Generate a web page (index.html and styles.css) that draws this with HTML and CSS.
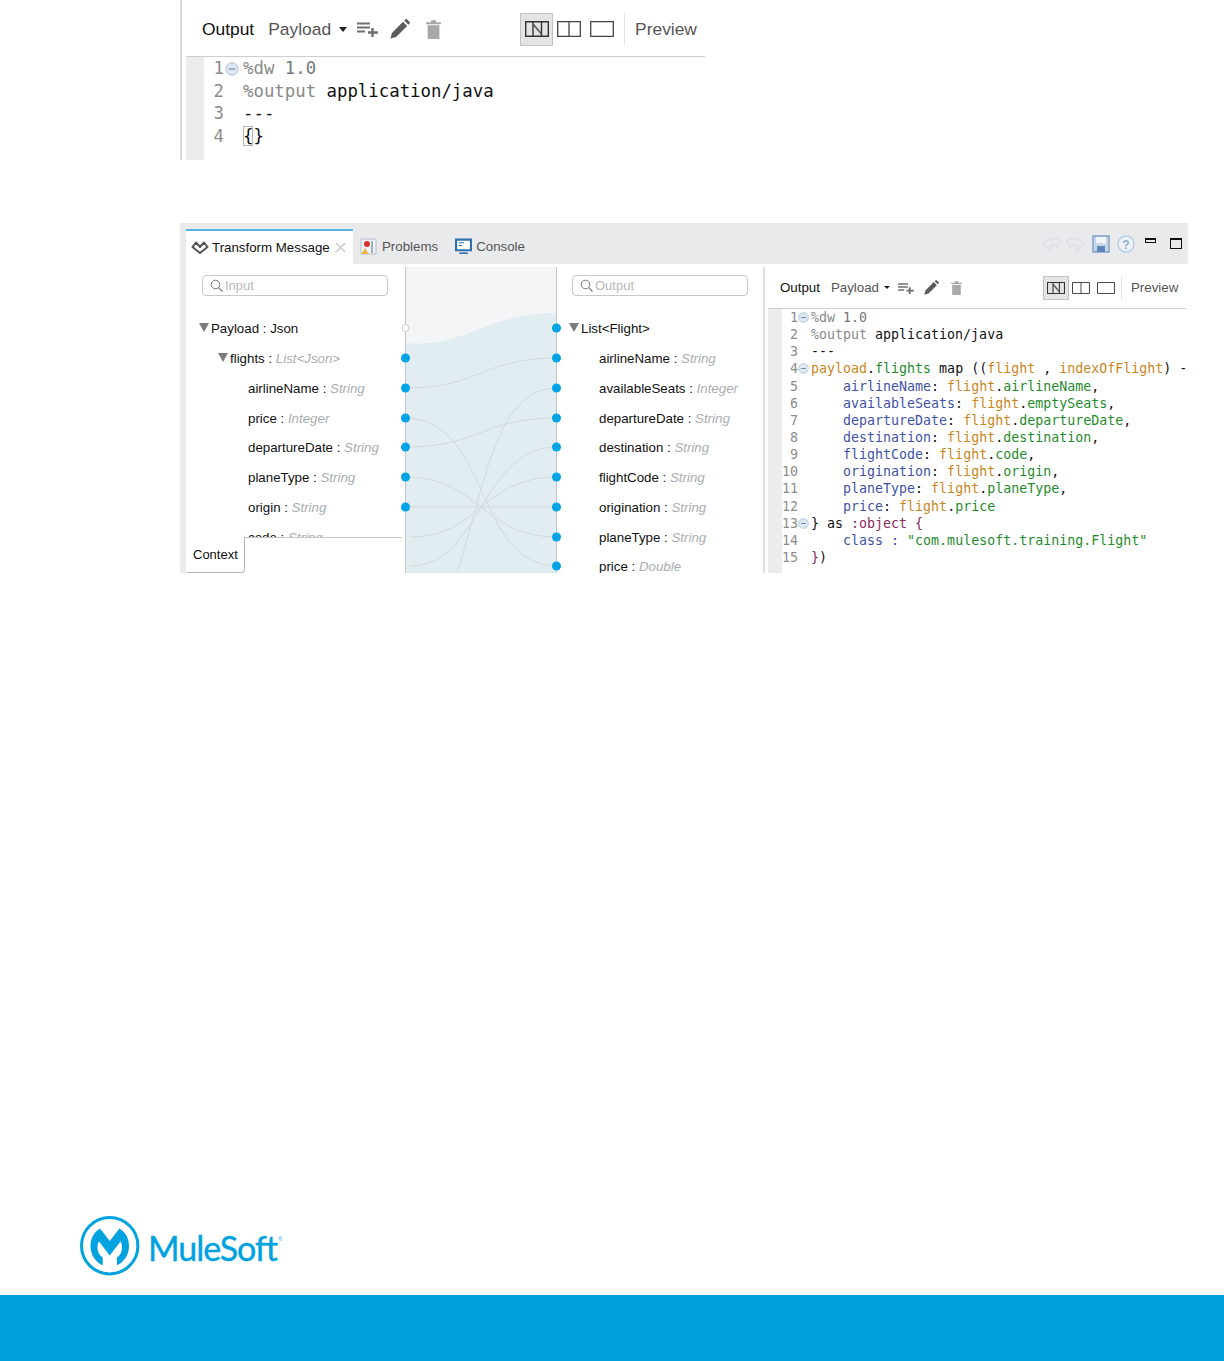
FILE: index.html
```html
<!DOCTYPE html>
<html lang="en">
<head>
<meta charset="utf-8">
<title>Transform Message</title>
<link rel="stylesheet" href="styles.css">
</head>
<body>
<svg class="defs" width="0" height="0" aria-hidden="true">
  <symbol id="i-add" viewBox="0 0 21 16"><path d="M0 2.5h13M0 6.5h13M0 10.5h8" stroke="#6f6f6f" stroke-width="2" fill="none"/><path d="M15.5 7v9M11 11.5h10" stroke="#6f6f6f" stroke-width="2.4" fill="none"/></symbol>
  <symbol id="i-pen" viewBox="0 0 20 20"><path d="M0.5 19.5l1.4-5.6L13 2.8l4.2 4.2L6.1 18.1z" fill="#5c5c5c"/><path d="M14.2 1.6l1-1a1.4 1.4 0 0 1 2 0l2.2 2.2a1.4 1.4 0 0 1 0 2l-1 1z" fill="#5c5c5c"/></symbol>
  <symbol id="i-trash" viewBox="0 0 15 19"><path d="M0 2.2h15v2H0zM5 .2h5v2H5z" fill="#a8a8a8"/><path d="M1.6 5.2h11.8V19H1.6z" fill="#a8a8a8"/></symbol>
  <symbol id="i-map" viewBox="0 0 24 16"><path d="M.7.7h22.6v14.6H.7z" fill="none" stroke="#333" stroke-width="1.4"/><path d="M8 .7v14.6M16.5.7v14.6" stroke="#333" stroke-width="1.4"/><path d="M8 3l8.5 10" stroke="#555" stroke-width="1.6"/></symbol>
  <symbol id="i-split" viewBox="0 0 24 16"><path d="M.7.7h22.6v14.6H.7zM12 .7v14.6" fill="none" stroke="#444" stroke-width="1.3"/></symbol>
  <symbol id="i-single" viewBox="0 0 24 16"><path d="M.7.7h22.6v14.6H.7z" fill="none" stroke="#444" stroke-width="1.3"/></symbol>
  <symbol id="i-fold" viewBox="0 0 14 14"><circle cx="7" cy="7" r="6.2" fill="#dfe8f0" stroke="#a9c0d4"/><path d="M3.8 7h6.4" stroke="#6f93b2" stroke-width="1.3"/></symbol>
</svg>

<div class="page">
  <section class="shot shot-small">
    <div class="toolbar">
      <span class="tb-title">Output</span>
      <span class="tb-select">Payload</span>
      <span class="tb-caret"></span>
      <svg class="tb-add"><use href="#i-add"/></svg>
      <svg class="tb-pen"><use href="#i-pen"/></svg>
      <svg class="tb-trash"><use href="#i-trash"/></svg>
      <span class="tb-view tb-view-on"><svg class="tb-view-icon"><use href="#i-map"/></svg></span>
      <span class="tb-view"><svg class="tb-view-icon"><use href="#i-split"/></svg></span>
      <span class="tb-view"><svg class="tb-view-icon"><use href="#i-single"/></svg></span>
      <span class="tb-preview">Preview</span>
    </div>
    <div class="code code-small">
      <div class="ln"><span class="n">1</span><svg class="fold"><use href="#i-fold"/></svg><span class="d">%dw</span> <span class="g">1.0</span></div>
      <div class="ln"><span class="n">2</span><span class="nofold"></span><span class="d">%output</span> application/java</div>
      <div class="ln"><span class="n">3</span><span class="nofold"></span>---</div>
      <div class="ln"><span class="n">4</span><span class="nofold"></span><span class="match">{</span>}</div>
    </div>
  </section>

  <section class="shot-large">
    <header class="tabbar">
      <div class="tab tab-active">
        <svg class="tab-icon-t" viewBox="0 0 18 13"><path d="M1.500 6L9 12l7.500-6L13 1.500 9 6 5 1.500z" fill="none" stroke="#555" stroke-width="2" stroke-linejoin="round"/></svg>
        <span>Transform Message</span>
        <svg class="tab-close" viewBox="0 0 11 11"><path d="M1 1l9 9M10 1l-9 9" stroke="#c9c9c9" stroke-width="1.6"/></svg>
      </div>
      <div class="tab">
        <svg class="tab-icon" viewBox="0 0 17 17"><path d="M1 1h15v15H1z" fill="#eef1f5" stroke="#b8c0cc"/><path d="M12 3v12" stroke="#9db0c8" stroke-width="2"/><circle cx="7" cy="6" r="3" fill="#d8342c"/><path d="M5 10l3.500 6h-7z" fill="#eab53d"/></svg>
        <span>Problems</span>
      </div>
      <div class="tab">
        <svg class="tab-icon" viewBox="0 0 16 15"><path d="M1 1h14v10H1z" fill="#fff" stroke="#2f6fb0" stroke-width="2"/><path d="M3.500 4h5M3.500 6.500h3" stroke="#2f6fb0"/><path d="M4 13h8v1.500H4z" fill="#2f6fb0"/></svg>
        <span>Console</span>
      </div>
      <div class="tab-actions">
        <svg class="act" viewBox="0 0 20 17"><path d="M1 9l8-7 1 3c5-2 8-1 9 0l-3 8-2-3-5 1v5z" fill="none" stroke="#dcdfe3" stroke-width="1.300"/></svg>
        <svg class="act" viewBox="0 0 20 17"><path d="M19 9l-8-7-1 3C5 3 2 4 1 5l3 8 2-3 5 1v5z" fill="none" stroke="#dcdfe3" stroke-width="1.300"/></svg>
        <svg class="act-save" viewBox="0 0 18 18"><path d="M1 1h16v16H1z" fill="#c8d6e8" stroke="#7f9dc4" stroke-width="1.400"/><path d="M4 2h10v6H4z" fill="#f1f4f8"/><path d="M5 11h8v6H5z" fill="#5f86b8"/></svg>
        <svg class="act-help" viewBox="0 0 18 18"><circle cx="9" cy="9" r="8" fill="#eef2f7" stroke="#b7cce2" stroke-width="1.400"/><text x="9" y="13.500" class="help-q">?</text></svg>
        <span class="act-min"></span>
        <span class="act-max"></span>
      </div>
    </header>

    <div class="workspace">
      <div class="pane pane-in">
        <div class="search"><svg class="search-icon" viewBox="0 0 13 13"><circle cx="5.500" cy="5.500" r="4.300" fill="none" stroke="#777" stroke-width="1"/><path d="M8.700 8.700l3.800 3.800" stroke="#777" stroke-width="1.200"/></svg><span>Input</span></div>
        <ul class="tree">
          <li class="row d0"><i class="tri"></i><span>Payload : Json</span></li>
          <li class="row d1"><i class="tri"></i><span>flights : <em>List&lt;Json&gt;</em></span></li>
          <li class="row d2"><span>airlineName : <em>String</em></span></li>
          <li class="row d2"><span>price : <em>Integer</em></span></li>
          <li class="row d2"><span>departureDate : <em>String</em></span></li>
          <li class="row d2"><span>planeType : <em>String</em></span></li>
          <li class="row d2"><span>origin : <em>String</em></span></li>
          <li class="row d2"><span>code : <em>String</em></span></li>
        </ul>
        <div class="context"><div class="context-tab">Context</div></div>
      </div>

      <svg class="mapping" viewBox="0 0 152 306">
        <rect width="152" height="306" fill="#f3f5f6"/>
        <path d="M0 76C60 82 80 46 152 46V306H0Z" fill="#e2edf2"/>
        <path class="rail" d="M.5 0V306M151.500 0V306"/>
        <g class="links">
          <path d="M0 121C76 121 76 91 152 91"/>
          <path d="M0 151C85 151 70 299 152 299"/>
          <path d="M0 180C76 180 76 151 152 151"/>
          <path d="M0 210C76 210 76 270 152 270"/>
          <path d="M0 240H152"/>
          <path d="M5 270C76 270 76 210 152 210"/>
          <path d="M5 299C76 299 76 180 152 180"/>
          <path d="M52 306C80 220 90 121 152 121"/>
        </g>
        <g class="dots">
          <circle class="dot-open" cx="0.500" cy="61" r="3.500"/>
          <circle cx="0.500" cy="91" r="4.500"/><circle cx="0.500" cy="121" r="4.500"/><circle cx="0.500" cy="151" r="4.500"/><circle cx="0.500" cy="180" r="4.500"/><circle cx="0.500" cy="210" r="4.500"/><circle cx="0.500" cy="240" r="4.500"/>
          <circle cx="151.500" cy="61" r="4.500"/><circle cx="151.500" cy="91" r="4.500"/><circle cx="151.500" cy="121" r="4.500"/><circle cx="151.500" cy="151" r="4.500"/><circle cx="151.500" cy="180" r="4.500"/><circle cx="151.500" cy="210" r="4.500"/><circle cx="151.500" cy="240" r="4.500"/><circle cx="151.500" cy="270" r="4.500"/><circle cx="151.500" cy="299" r="4.500"/>
        </g>
      </svg>

      <div class="pane pane-out">
        <div class="search"><svg class="search-icon" viewBox="0 0 13 13"><circle cx="5.500" cy="5.500" r="4.300" fill="none" stroke="#777" stroke-width="1"/><path d="M8.700 8.700l3.800 3.800" stroke="#777" stroke-width="1.200"/></svg><span>Output</span></div>
        <ul class="tree">
          <li class="row d0o"><i class="tri"></i><span>List&lt;Flight&gt;</span></li>
          <li class="row d2o"><span>airlineName : <em>String</em></span></li>
          <li class="row d2o"><span>availableSeats : <em>Integer</em></span></li>
          <li class="row d2o"><span>departureDate : <em>String</em></span></li>
          <li class="row d2o"><span>destination : <em>String</em></span></li>
          <li class="row d2o"><span>flightCode : <em>String</em></span></li>
          <li class="row d2o"><span>origination : <em>String</em></span></li>
          <li class="row d2o"><span>planeType : <em>String</em></span></li>
          <li class="row d2o"><span>price : <em>Double</em></span></li>
        </ul>
      </div>

      <div class="editor">
        <div class="toolbar">
          <span class="tb-title">Output</span>
          <span class="tb-select">Payload</span>
          <span class="tb-caret"></span>
          <svg class="tb-add"><use href="#i-add"/></svg>
          <svg class="tb-pen"><use href="#i-pen"/></svg>
          <svg class="tb-trash"><use href="#i-trash"/></svg>
          <span class="tb-view tb-view-on"><svg class="tb-view-icon"><use href="#i-map"/></svg></span>
          <span class="tb-view"><svg class="tb-view-icon"><use href="#i-split"/></svg></span>
          <span class="tb-view"><svg class="tb-view-icon"><use href="#i-single"/></svg></span>
          <span class="tb-preview">Preview</span>
        </div>
        <div class="code code-large">
          <div class="ln"><span class="n">1</span><svg class="fold"><use href="#i-fold"/></svg><span class="d">%dw</span> <span class="g">1.0</span></div>
          <div class="ln"><span class="n">2</span><span class="nofold"></span><span class="d">%output</span> application/java</div>
          <div class="ln"><span class="n">3</span><span class="nofold"></span>---</div>
          <div class="ln"><span class="n">4</span><svg class="fold"><use href="#i-fold"/></svg><span class="o">payload</span>.<span class="v">flights</span> map ((<span class="o">flight</span> , <span class="o">indexOfFlight</span>) -</div>
          <div class="ln"><span class="n">5</span><span class="nofold"></span>    <span class="k">airlineName</span>: <span class="o">flight</span>.<span class="v">airlineName</span>,</div>
          <div class="ln"><span class="n">6</span><span class="nofold"></span>    <span class="k">availableSeats</span>: <span class="o">flight</span>.<span class="v">emptySeats</span>,</div>
          <div class="ln"><span class="n">7</span><span class="nofold"></span>    <span class="k">departureDate</span>: <span class="o">flight</span>.<span class="v">departureDate</span>,</div>
          <div class="ln"><span class="n">8</span><span class="nofold"></span>    <span class="k">destination</span>: <span class="o">flight</span>.<span class="v">destination</span>,</div>
          <div class="ln"><span class="n">9</span><span class="nofold"></span>    <span class="k">flightCode</span>: <span class="o">flight</span>.<span class="v">code</span>,</div>
          <div class="ln"><span class="n">10</span><span class="nofold"></span>    <span class="k">origination</span>: <span class="o">flight</span>.<span class="v">origin</span>,</div>
          <div class="ln"><span class="n">11</span><span class="nofold"></span>    <span class="k">planeType</span>: <span class="o">flight</span>.<span class="v">planeType</span>,</div>
          <div class="ln"><span class="n">12</span><span class="nofold"></span>    <span class="k">price</span>: <span class="o">flight</span>.<span class="v">price</span></div>
          <div class="ln"><span class="n">13</span><svg class="fold"><use href="#i-fold"/></svg>} as <span class="p">:object {</span></div>
          <div class="ln"><span class="n">14</span><span class="nofold"></span>    <span class="k">class :</span> <span class="v">"com.mulesoft.training.Flight"</span></div>
          <div class="ln"><span class="n">15</span><span class="nofold"></span><span class="p">}</span>)</div>
        </div>
      </div>
    </div>
  </section>

  <div class="brand">
    <svg class="brand-mark" viewBox="0 0 60 60">
      <circle cx="29.700" cy="29.700" r="28.200" fill="none" stroke="#00a2df" stroke-width="3"/>
      <path d="M20 12.500L29.700 25L39.500 12.500C45.500 16 49 22.500 49 30C49 39 44 46 37 49.300V41.500C40 39.500 42 36 42 31.500C42 29 41.500 27 40.500 25.500L29.700 39.500L19 25.500C18 27 17.500 29 17.500 31.500C17.500 36 19.500 39.500 22.700 41.500V49.300C15.500 46 10.500 39 10.500 30C10.500 22.500 14 16 20 12.500Z" fill="#00a2df"/>
    </svg>
    <span class="brand-name">MuleSoft</span><span class="brand-reg">®</span>
  </div>
  <footer class="footer-bar"></footer>
</div>
</body>
</html>
```
FILE: styles.css
```css
* { box-sizing: border-box; }
html, body { margin: 0; padding: 0; background: #fff; }
body { font-family: "Liberation Sans", Arial, sans-serif; color: #111; }
.defs { position: absolute; }
.page { width: 1224px; height: 1361px; display: flex; flex-direction: column; overflow: hidden; }

/* shared toolbar */
.toolbar { display: flex; align-items: center; white-space: nowrap; border-bottom: 1px solid #cfcfcf; }
.tb-select { color: #555; }
.tb-caret { width: 0; height: 0; border-left: .24em solid transparent; border-right: .24em solid transparent; border-top: .3em solid #222; }
.tb-add, .tb-pen, .tb-trash, .tb-view-icon { display: block; flex: none; }
.tb-view { display: flex; align-items: center; justify-content: center; }
.tb-view-on { background: #e4e4e4; border: 1px solid #c2c2c2; }
.tb-preview { color: #555; border-left: 1px solid #e2e2e2; }

/* code */
.code { font-family: "DejaVu Sans Mono", monospace; overflow: hidden; color: #111; }
.ln { white-space: pre; }
.n { color: #8c8c8c; text-align: right; display: inline-block; }
.fold, .nofold { display: inline-block; }
.d { color: #8a8a8a; }
.g { color: #777; }
.o { color: #c8871c; }
.v { color: #1f8d2d; }
.k { color: #3f53a6; }
.p { color: #8c2a63; }
.match { outline: 1px solid #b5b5b5; outline-offset: -1px; }

/* first screenshot */
.shot-small { flex: none; width: 525px; height: 160px; margin-left: 180px; padding-left: 4px; border-left: 2px solid #d9d9d9; display: flex; flex-direction: column; }
.shot-small .toolbar { flex: none; height: 57px; padding: 2px 0 0 16px; font-size: 17.4px; }
.shot-small .tb-select { margin-left: 14px; }
.shot-small .tb-caret { margin-left: 8px; }
.shot-small .tb-add { width: 21px; height: 16px; margin-left: 10px; }
.shot-small .tb-pen { width: 20px; height: 20px; margin-left: 12px; }
.shot-small .tb-trash { width: 15px; height: 19px; margin-left: 16px; }
.shot-small .tb-view { width: 33px; height: 33px; margin-left: 79px; }
.shot-small .tb-view + .tb-view { width: 24px; margin-left: 4px; }
.shot-small .tb-view + .tb-view + .tb-view { margin-left: 9px; }
.shot-small .tb-view-icon { width: 24px; height: 16px; }
.shot-small .tb-preview { margin-left: 10px; padding-left: 10px; line-height: 33px; }
.code-small { flex: 1; font-size: 17.35px; line-height: 22.6px; background: linear-gradient(90deg, #ececec 18px, #fff 18px); }
.code-small .n { width: 38px; }
.code-small .fold { width: 14px; height: 14px; margin: 0 4px 0 1px; vertical-align: -2px; }
.code-small .nofold { width: 19px; }

/* second screenshot */
.shot-large { flex: none; width: 1008px; height: 350px; margin: 63px 0 0 180px; display: flex; flex-direction: column; background: #e9eaec; padding-left: 6px; }
.tabbar { flex: none; height: 41px; display: flex; align-items: flex-end; font-size: 13.3px; color: #555; }
.tab { height: 35px; display: flex; align-items: center; gap: 5px; padding: 0 0 0 8px; }
.tab + .tab { padding-left: 7px; }
.tab + .tab + .tab { padding-left: 17px; gap: 4px; }
.tab-active { width: 167px; background: #fff; border-top: 2px solid #5cb3e3; color: #111; padding: 0 0 0 5px; gap: 3px; }
.tab-icon-t { width: 18px; height: 13px; flex: none; }
.tab-close { width: 11px; height: 11px; flex: none; margin-left: 2px; }
.tab-icon { width: 17px; height: 17px; flex: none; }
.tab-actions { margin-left: auto; display: flex; align-items: center; height: 41px; padding-right: 6px; }
.act { width: 19px; height: 17px; margin-right: 5px; }
.act-save { width: 18px; height: 18px; margin-left: 2px; }
.act-help { width: 18px; height: 18px; margin-left: 7px; }
.help-q { font: bold 12px "Liberation Sans", sans-serif; fill: #8fb0d2; text-anchor: middle; }
.act-min { width: 11px; height: 5px; border: 1px solid #111; border-top-width: 2px; margin: 0 0 6px 10px; }
.act-max { width: 12px; height: 11px; border: 1px solid #111; border-top-width: 2px; margin-left: 14px; }

.workspace { flex: 1; min-height: 0; display: flex; background: #fff; padding-top: 3px; font-size: 13.3px; }
.pane { flex: none; position: relative; overflow: hidden; height: 100%; }
.pane-in { width: 219px; }
.pane-out { width: 208px; border-right: 2px solid #dfdfdf; }
.search { height: 21px; margin-top: 8px; border: 1px solid #c9c9c9; border-radius: 4px; display: flex; align-items: center; gap: 2px; padding-left: 7px; color: #b8b8b8; font-size: 13px; }
.pane-in .search { width: 186px; margin-left: 16px; }
.pane-out .search { width: 176px; margin-left: 15px; }
.search-icon { width: 13px; height: 13px; flex: none; }
.tree { list-style: none; margin: 18px 0 0; padding: 0; }
.row { height: 29.75px; display: flex; align-items: center; white-space: nowrap; }
.row em { color: #a9adb2; }
.d0 { padding-left: 13px; }
.d1 { padding-left: 32px; }
.d2 { padding-left: 62px; }
.d0o { padding-left: 12px; }
.d2o { padding-left: 42px; }
.tri { width: 0; height: 0; flex: none; margin-right: 2px; margin-top: -3px; border-left: 5.500px solid transparent; border-right: 5.500px solid transparent; border-top: 9px solid #7d7d7d; }
.context { position: absolute; left: 1px; right: 3px; bottom: 0; height: 36px; background: #fff; border-top: 1px solid #c6c6c6; }
.context-tab { width: 58px; height: 36px; margin-top: -1px; background: #fff; border-right: 1px solid #b5b5b5; border-bottom: 1px solid #b5b5b5; border-bottom-right-radius: 4px; padding: 10px 0 0 6px; font-size: 13px; }

.mapping { flex: none; width: 152px; height: 100%; overflow: visible; position: relative; z-index: 1; }
.rail { stroke: #c3c7ca; fill: none; }
.links path { fill: none; stroke: #d4d9da; stroke-width: 1; }
.dots circle { fill: #00a3e6; }
.dots .dot-open { fill: #fff; stroke: #ccc; }

.editor { flex: 1; min-width: 0; display: flex; flex-direction: column; margin-left: 3px; padding-right: 2px; }
.editor .toolbar { height: 42px; flex: none; padding-left: 12px; font-size: 13.3px; }
.editor .tb-select { margin-left: 11px; }
.editor .tb-caret { margin-left: 5px; }
.editor .tb-add { width: 16px; height: 12px; margin-left: 8px; }
.editor .tb-pen { width: 15px; height: 15px; margin-left: 10px; }
.editor .tb-trash { width: 11px; height: 14px; margin-left: 12px; }
.editor .tb-view { width: 26px; height: 24px; margin-left: 81px; }
.editor .tb-view + .tb-view { width: 18px; margin-left: 3px; }
.editor .tb-view + .tb-view + .tb-view { margin-left: 7px; }
.editor .tb-view-icon { width: 18px; height: 12px; }
.editor .tb-preview { margin-left: 6px; padding-left: 9px; line-height: 24px; }
.code-large { flex: 1; font-size: 13.3px; line-height: 17.14px; background: linear-gradient(90deg, #ececec 14px, #fff 14px); }
.code-large .n { width: 30px; }
.code-large .fold { width: 11px; height: 11px; margin: 0 2px 0 0; vertical-align: -1px; }
.code-large .nofold { width: 13px; }

/* brand */
.brand { flex: none; margin: auto 0 19px 80px; display: flex; align-items: center; height: 60px; color: #00a2df; }
.brand-mark { width: 60px; height: 60px; flex: none; }
.brand-name { font-family: Lato, sans-serif; font-size: 34px; letter-spacing: -1px; margin: 2px 0 0 8px; -webkit-text-stroke: .4px #00a2df; }
.brand-reg { font-family: "Liberation Sans", sans-serif; font-size: 6px; align-self: flex-start; margin: 20px 0 0 1px; }
.footer-bar { flex: none; height: 66px; background: #00a0df; }
```
